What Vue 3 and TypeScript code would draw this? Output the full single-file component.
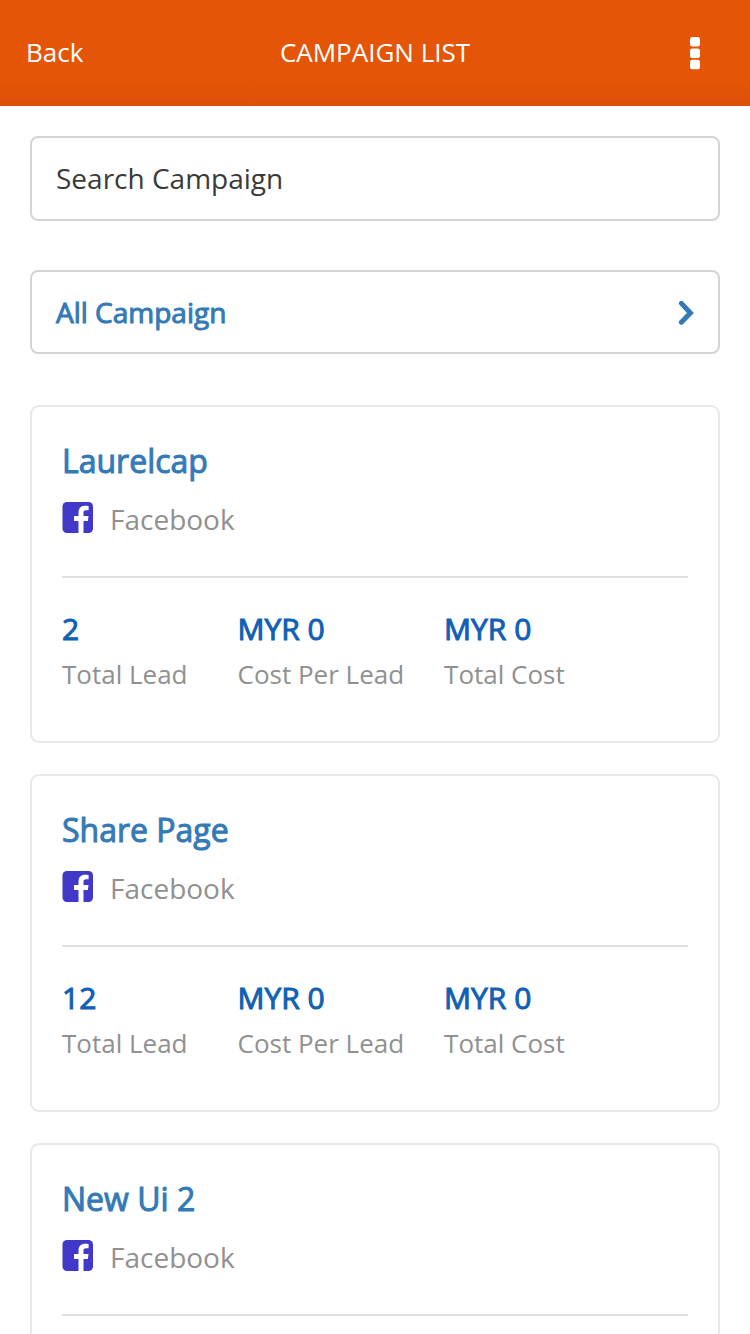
<script setup lang="ts">
import { ref } from 'vue'

interface Stat { label: string; value: string }
interface Campaign { name: string; channel: string; stats: Stat[] }

const search = ref('')
const makeStats = (leads: string): Stat[] => [
  { label: 'Total Lead', value: leads },
  { label: 'Cost Per Lead', value: 'MYR 0' },
  { label: 'Total Cost', value: 'MYR 0' },
]
const campaigns: Campaign[] = [
  { name: 'Laurelcap', channel: 'Facebook', stats: makeStats('2') },
  { name: 'Share Page', channel: 'Facebook', stats: makeStats('12') },
  { name: 'New Ui 2', channel: 'Facebook', stats: [] },
]
</script>

<template>
  <div class="page">
    <header class="bar">
      <a class="back" href="#">Back</a>
      <h1>CAMPAIGN LIST</h1>
      <button class="menu" type="button" aria-label="Menu">
        <svg width="10" height="34" viewBox="0 0 10 34" fill="currentColor">
          <rect y="1" width="10" height="9.4" rx="2.5" />
          <rect y="12.6" width="10" height="9.4" rx="2.5" />
          <rect y="23.8" width="10" height="9.4" rx="2.5" />
        </svg>
      </button>
    </header>
    <main>
      <input v-model="search" class="search" type="text" placeholder="Search Campaign" aria-label="Search Campaign" />
      <button class="filter" type="button">
        <span>All Campaign</span>
        <svg width="16" height="26" viewBox="0 0 16 26" fill="none" stroke="currentColor" stroke-width="5">
          <path d="M3.400 4.400 12.400 14 3.400 23.200" stroke-linejoin="miter" stroke-linecap="round" />
        </svg>
      </button>
      <ul class="list">
        <li v-for="c in campaigns" :key="c.name" class="card">
          <h2>{{ c.name }}</h2>
          <div class="channel">
            <svg width="31" height="31" viewBox="0 0 31 31">
              <rect x="0.5" width="30.5" height="31" rx="4.5" fill="#4038c8" />
              <path d="M16.500 31V19H12v-5h4.500v-3.600c0-4.400 2.700-6.600 6.500-6.600 1.500 0 2.900.1 3.600.2v4.300h-2.500c-2 0-2.600.9-2.600 2.500V14h5l-.6 5h-4.400v12z" fill="#fff" />
            </svg>
            <span>{{ c.channel }}</span>
          </div>
          <dl class="stats">
            <div v-for="s in c.stats" :key="s.label" class="stat">
              <dt>{{ s.label }}</dt>
              <dd>{{ s.value }}</dd>
            </div>
          </dl>
        </li>
      </ul>
    </main>
  </div>
</template>

<style>
body { margin: 0; background: #fff; }
html { scrollbar-width: none; }
</style>

<style scoped>
.page { font-family: "Open Sans", "Noto Sans", sans-serif; }
.bar { display: grid; grid-template-columns: 1fr auto 1fr; align-items: center; height: 106px; padding: 0 26px; box-sizing: border-box; background: linear-gradient(#e55507 75%, #dc5008); color: #fff; }
.back, h1 { margin: 0; padding-bottom: 2px; font-size: 26px; line-height: 36px; font-weight: 400; }
.back { justify-self: start; color: inherit; text-decoration: none; }
.menu { justify-self: end; display: flex; padding: 0 24px; border: 0; background: none; color: inherit; }
main { padding: 30px; }
.search, .filter { display: flex; align-items: center; justify-content: space-between; width: 100%; height: 85px; box-sizing: border-box; padding: 0 24px 2px; border: 2px solid #d4d4d4; border-radius: 8px; background: #fff; font-family: inherit; font-size: 28px; }
.search::placeholder { color: #3a3a3a; opacity: 1; }
.filter { height: 84px; margin-top: 49px; padding-bottom: 0; color: #337ab7; }
.filter span, h2, dd { font-weight: 400; -webkit-text-stroke: 1px currentColor; }
.list { list-style: none; margin: 51px 0 0; padding: 0; display: flex; flex-direction: column; gap: 31px; }
.card { box-sizing: border-box; min-height: 338px; padding: 32px 30px; border: 2px solid #e8e8e8; border-radius: 9px; }
h2 { margin: 0; font-size: 32px; line-height: 44px; color: #337ab7; }
.channel { display: flex; align-items: center; gap: 17px; height: 36px; margin-top: 17px; font-size: 28px; color: #909090; }
.channel svg { margin-bottom: 2px; }
.channel span { padding-top: 2px; }
.stats { display: flex; gap: 40px; margin: 40px 0 0; padding-top: 31px; border-top: 2px solid #e0e0e0; }
.stat { display: flex; flex-direction: column-reverse; }
.stat:first-child { margin-right: 10px; }
dt { font-size: 26px; line-height: 36px; color: #909090; }
dd { margin: 0 0 7px; font-size: 30px; line-height: 40px; color: #1060b5; }
</style>
